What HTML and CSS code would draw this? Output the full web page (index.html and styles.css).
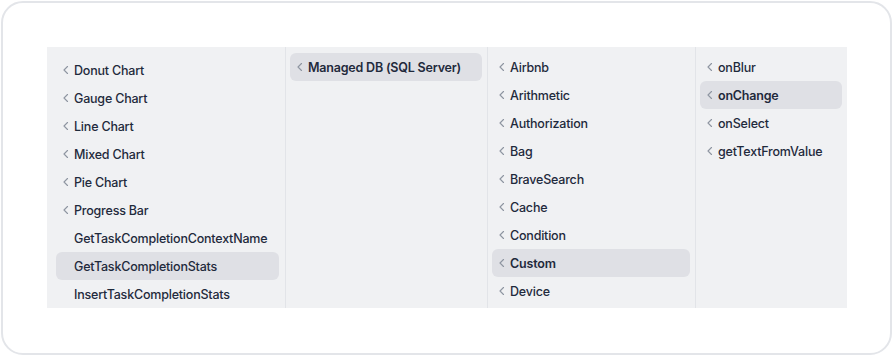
FILE: index.html
```html
<!DOCTYPE html>
<html lang="en">
<head>
  <meta charset="UTF-8" />
  <meta name="viewport" content="width=device-width, initial-scale=1.0" />
  <title>Column Browser</title>
  <link rel="stylesheet" href="styles.css">
</head>
<body>
  <div class="card">
    <div class="browser">
      <div class="col col-first">
        <div class="item"><span class="chev"><svg viewBox="0 0 8 8"><polyline points="5.5,0.5 2,4 5.5,7.5" /></svg></span>Donut Chart</div>
        <div class="item"><span class="chev"><svg viewBox="0 0 8 8"><polyline points="5.5,0.5 2,4 5.5,7.5" /></svg></span>Gauge Chart</div>
        <div class="item"><span class="chev"><svg viewBox="0 0 8 8"><polyline points="5.5,0.5 2,4 5.5,7.5" /></svg></span>Line Chart</div>
        <div class="item"><span class="chev"><svg viewBox="0 0 8 8"><polyline points="5.5,0.5 2,4 5.5,7.5" /></svg></span>Mixed Chart</div>
        <div class="item"><span class="chev"><svg viewBox="0 0 8 8"><polyline points="5.5,0.5 2,4 5.5,7.5" /></svg></span>Pie Chart</div>
        <div class="item"><span class="chev"><svg viewBox="0 0 8 8"><polyline points="5.5,0.5 2,4 5.5,7.5" /></svg></span>Progress Bar</div>
        <div class="item"><span class="chev"></span>GetTaskCompletionContextName</div>
        <div class="item selected"><span class="chev"></span>GetTaskCompletionStats</div>
        <div class="item"><span class="chev"></span>InsertTaskCompletionStats</div>
      </div>

      <div class="col col-second">
        <div class="item selected strong"><span class="chev"><svg viewBox="0 0 8 8"><polyline points="5.5,0.5 2,4 5.5,7.5" /></svg></span>Managed DB (SQL Server)</div>
      </div>

      <div class="col col-third">
        <div class="item"><span class="chev"><svg viewBox="0 0 8 8"><polyline points="5.5,0.5 2,4 5.5,7.5" /></svg></span>Airbnb</div>
        <div class="item"><span class="chev"><svg viewBox="0 0 8 8"><polyline points="5.5,0.5 2,4 5.5,7.5" /></svg></span>Arithmetic</div>
        <div class="item"><span class="chev"><svg viewBox="0 0 8 8"><polyline points="5.5,0.5 2,4 5.5,7.5" /></svg></span>Authorization</div>
        <div class="item"><span class="chev"><svg viewBox="0 0 8 8"><polyline points="5.5,0.5 2,4 5.5,7.5" /></svg></span>Bag</div>
        <div class="item"><span class="chev"><svg viewBox="0 0 8 8"><polyline points="5.5,0.5 2,4 5.5,7.5" /></svg></span>BraveSearch</div>
        <div class="item"><span class="chev"><svg viewBox="0 0 8 8"><polyline points="5.5,0.5 2,4 5.5,7.5" /></svg></span>Cache</div>
        <div class="item"><span class="chev"><svg viewBox="0 0 8 8"><polyline points="5.5,0.5 2,4 5.5,7.5" /></svg></span>Condition</div>
        <div class="item selected strong"><span class="chev"><svg viewBox="0 0 8 8"><polyline points="5.5,0.5 2,4 5.5,7.5" /></svg></span>Custom</div>
        <div class="item"><span class="chev"><svg viewBox="0 0 8 8"><polyline points="5.5,0.5 2,4 5.5,7.5" /></svg></span>Device</div>
      </div>

      <div class="col col-fourth">
        <div class="item"><span class="chev"><svg viewBox="0 0 8 8"><polyline points="5.5,0.5 2,4 5.5,7.5" /></svg></span>onBlur</div>
        <div class="item selected strong"><span class="chev"><svg viewBox="0 0 8 8"><polyline points="5.5,0.5 2,4 5.5,7.5" /></svg></span>onChange</div>
        <div class="item"><span class="chev"><svg viewBox="0 0 8 8"><polyline points="5.5,0.5 2,4 5.5,7.5" /></svg></span>onSelect</div>
        <div class="item"><span class="chev"><svg viewBox="0 0 8 8"><polyline points="5.5,0.5 2,4 5.5,7.5" /></svg></span>getTextFromValue</div>
      </div>
    </div>
  </div>
</body>
</html>
```

FILE: styles.css
```css
* { margin: 0; padding: 0; box-sizing: border-box; }
body {
  background: #ffffff;
  font-family: Inter, "Noto Sans", sans-serif;
  color: #1f2a3c;
  width: 894px;
  height: 356px;
  overflow: hidden;
}
.card {
  margin: 1px 0 0 1px;
  width: 891px;
  height: 354px;
  border: 2px solid #e3e5e9;
  border-radius: 22px;
  padding: 44px 0 0 44px;
}
.browser {
  display: flex;
  width: 800px;
  height: 261px;
  background: #f0f1f3;
  overflow: hidden;
}
.col {
  padding: 6px 5px 6px 4px;
  border-left: 1px solid #e2e4e8;
  overflow: hidden;
}
.col-first { width: 238px; padding: 9px 6px 0 9px; border-left: none; }
.col-second { width: 202px; }
.col-third { width: 208px; }
.col-fourth { width: 152px; }
.item {
  display: flex;
  align-items: center;
  height: 28px;
  padding-left: 6px;
  border-radius: 6px;
  font-size: 12.5px;
  letter-spacing: -0.2px;
  font-weight: 500;
  white-space: nowrap;
  color: #1f2a3c;
}
.item.selected { background: #dfe0e5; }
.item.strong { font-weight: 600; }
.chev {
  display: inline-flex;
  width: 8px;
  height: 8px;
  margin-right: 4px;
  flex-shrink: 0;
}
.chev svg { width: 8px; height: 8px; }
.chev polyline {
  fill: none;
  stroke: #8e95a1;
  stroke-width: 1.1;
  stroke-linecap: round;
  stroke-linejoin: round;
}
```
